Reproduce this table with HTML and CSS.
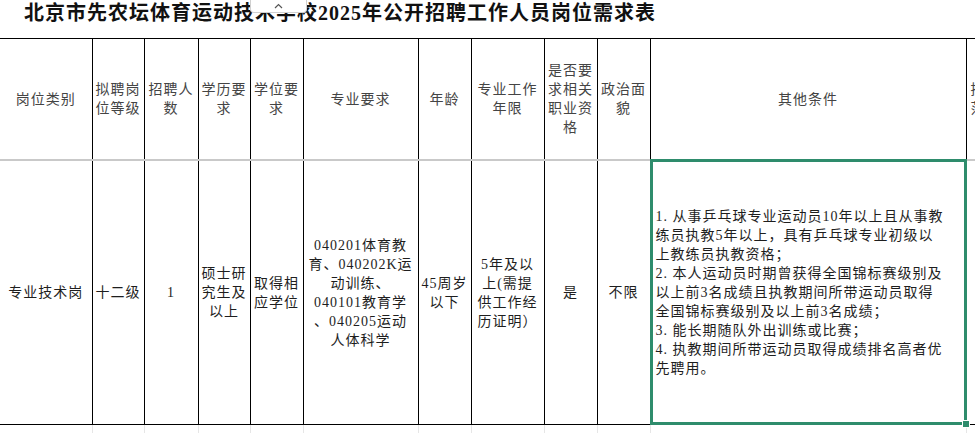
FILE: index.html
```html
<!DOCTYPE html>
<html lang="zh-CN">
<head>
<meta charset="utf-8">
<title>岗位需求表</title>
<link rel="stylesheet" href="styles.css">
</head>
<body>
<div class="page">
  <div class="title-bar">
    <h1 class="title">北京市先农坛体育运动技术学校2025年公开招聘工作人员岗位需求表</h1>
    <div class="collapse-tab">
      <svg width="9" height="6" viewBox="0 0 9 6"><path d="M1 5 L4.5 1.5 L8 5" fill="none" stroke="#555" stroke-width="1.2"/></svg>
    </div>
  </div>
  <table class="sheet">
    <colgroup>
      <col class="c92"><col class="c52"><col class="c54"><col class="c52"><col class="c53">
      <col class="c115"><col class="c53"><col class="c73"><col class="c53"><col class="c53">
      <col class="c316"><col class="c67">
    </colgroup>
    <thead>
      <tr class="head-row">
        <th class="first">岗位类别</th>
        <th>拟聘岗<br>位等级</th>
        <th>招聘人<br>数</th>
        <th>学历要<br>求</th>
        <th>学位要<br>求</th>
        <th>专业要求</th>
        <th>年龄</th>
        <th>专业工作<br>年限</th>
        <th>是否要<br>求相关<br>职业资<br>格</th>
        <th>政治面<br>貌</th>
        <th>其他条件</th>
        <th class="cut">招聘对象<br>范围</th>
      </tr>
    </thead>
    <tbody>
      <tr class="data-row">
        <td class="first">专业技术岗</td>
        <td>十二级</td>
        <td>1</td>
        <td>硕士研<br>究生及<br>以上</td>
        <td>取得相<br>应学位</td>
        <td>040201体育教<br>育、040202K运<br>动训练、<br>040101教育学<br>、040205运动<br>人体科学</td>
        <td>45周岁<br>以下</td>
        <td>5年及以<br>上(需提<br>供工作经<br>历证明）</td>
        <td>是</td>
        <td>不限</td>
        <td class="other selected">
          <span class="selection"></span>
          1. 从事乒乓球专业运动员10年以上且从事教<br>练员执教5年以上，具有乒乓球专业初级以<br>上教练员执教资格；<br>2. 本人运动员时期曾获得全国锦标赛级别及<br>以上前3名成绩且执教期间所带运动员取得<br>全国锦标赛级别及以上前3名成绩；<br>3. 能长期随队外出训练或比赛；<br>4. 执教期间所带运动员取得成绩排名高者优<br>先聘用。
        </td>
        <td class="cut"></td>
      </tr>
      <tr class="grid-row">
        <td class="first"></td><td></td><td></td><td></td><td></td><td></td>
        <td></td><td></td><td></td><td></td><td></td><td></td>
      </tr>
    </tbody>
  </table>
</div>
</body>
</html>
```
FILE: styles.css
```css
html, body {
  margin: 0;
  padding: 0;
  overflow: hidden;
  background: #fff;
}
body {
  font-family: "Liberation Serif", "Noto Sans CJK SC", serif;
  color: #222;
}
.page {
  width: 1033px;
}
.title-bar {
  position: relative;
  height: 38px;
}
.title {
  margin: 0;
  padding: 1px 0 0 24px;
  font-size: 20px;
  line-height: 24px;
  font-weight: bold;
  letter-spacing: 1px;
  color: #111;
  white-space: nowrap;
}
.collapse-tab {
  position: absolute;
  left: 250px;
  top: 0;
  width: 55px;
  height: 12px;
  background: #fff;
  border: 1px solid #d0d0d0;
  border-top: none;
  border-radius: 0 0 4px 4px;
  display: flex;
  justify-content: center;
  align-items: center;
}
.sheet {
  border-collapse: collapse;
  table-layout: fixed;
  width: 1033px;
}
.c92 { width: 92px; }
.c52 { width: 52px; }
.c53 { width: 53px; }
.c54 { width: 54px; }
.c73 { width: 73px; }
.c115 { width: 115px; }
.c316 { width: 316px; }
.c67 { width: 67px; }

.sheet th, .sheet td {
  padding: 0 2px;
  text-align: center;
  vertical-align: middle;
  font-size: 14px;
  letter-spacing: 1px;
  border-right: 1px solid #000;
  white-space: nowrap;
  overflow: visible;
}
.head-row th {
  height: 120px;
  border-top: 1px solid #000;
  border-bottom: 2px solid #c9c9c9;
  font-weight: normal;
  color: #444;
  line-height: 19px;
}
.data-row td {
  height: 263px;
  border-bottom: 1px solid #000;
  line-height: 19px;
  color: #1e1e1e;
}
.head-row th.cut {
  text-align: left;
  padding-left: 4px;
}
.data-row td.other {
  text-align: left;
  padding-left: 5px;
  line-height: 19px;
}
.selected {
  position: relative;
}
.selection {
  position: absolute;
  top: -2px;
  left: -1px;
  right: -1px;
  bottom: -1px;
  border: 3px solid #2e8c6c;
  pointer-events: none;
}
.selection::after {
  content: "";
  position: absolute;
  right: -6px;
  bottom: -6px;
  width: 6px;
  height: 6px;
  background: #2e8c6c;
  border: 1px solid #fff;
}
.grid-row td {
  height: 10px;
  border-right: 1px solid #e6e6e6;
}
```
